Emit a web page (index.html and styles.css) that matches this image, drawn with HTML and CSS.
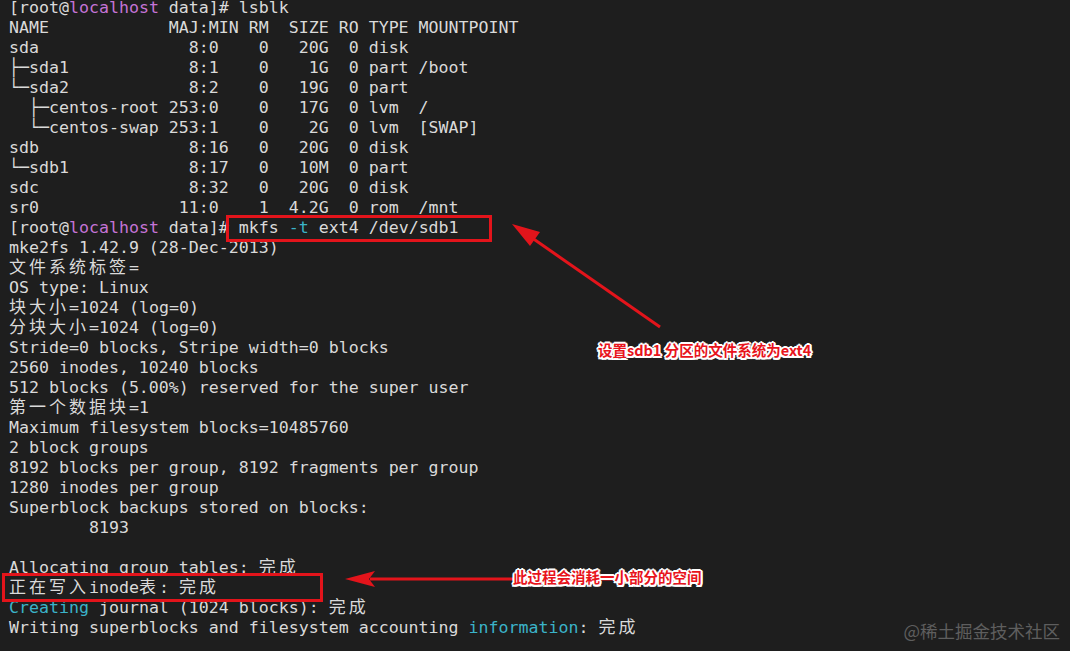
FILE: index.html
```html
<!DOCTYPE html>
<html>
<head>
<meta charset="utf-8" />
<title>mkfs</title>
<link rel="stylesheet" href="styles.css">
</head>
<body>
<div class="term">
<div class="screen">
<div class="ln">[root@<span class="host">localhost</span> data]# lsblk</div>
<div class="ln">NAME            MAJ:MIN RM  SIZE RO TYPE MOUNTPOINT</div>
<div class="ln">sda               8:0    0   20G  0 disk </div>
<div class="ln">├─sda1            8:1    0    1G  0 part /boot</div>
<div class="ln">└─sda2            8:2    0   19G  0 part </div>
<div class="ln">  ├─centos-root 253:0    0   17G  0 lvm  /</div>
<div class="ln">  └─centos-swap 253:1    0    2G  0 lvm  [SWAP]</div>
<div class="ln">sdb               8:16   0   20G  0 disk </div>
<div class="ln">└─sdb1            8:17   0   10M  0 part </div>
<div class="ln">sdc               8:32   0   20G  0 disk </div>
<div class="ln">sr0              11:0    1  4.2G  0 rom  /mnt</div>
<div class="ln">[root@<span class="host">localhost</span> data]# mkfs <span class="opt">-t</span> ext4 /dev/sdb1</div>
<div class="ln">mke2fs 1.42.9 (28-Dec-2013)</div>
<div class="ln"><span class="cjk">文件系统标签</span>=</div>
<div class="ln">OS type: Linux</div>
<div class="ln"><span class="cjk">块大小</span>=1024 (log=0)</div>
<div class="ln"><span class="cjk">分块大小</span>=1024 (log=0)</div>
<div class="ln">Stride=0 blocks, Stripe width=0 blocks</div>
<div class="ln">2560 inodes, 10240 blocks</div>
<div class="ln">512 blocks (5.00%) reserved for the super user</div>
<div class="ln"><span class="cjk">第一个数据块</span>=1</div>
<div class="ln">Maximum filesystem blocks=10485760</div>
<div class="ln">2 block groups</div>
<div class="ln">8192 blocks per group, 8192 fragments per group</div>
<div class="ln">1280 inodes per group</div>
<div class="ln">Superblock backups stored on blocks: </div>
<div class="ln">        8193</div>
<div class="ln"></div>
<div class="ln">Allocating group tables: <span class="cjk">完成</span></div>
<div class="ln"><span class="cjk">正在写入</span>inode<span class="cjk">表</span>: <span class="cjk">完成</span></div>
<div class="ln"><span class="opt">Creating</span> journal (1024 blocks): <span class="cjk">完成</span></div>
<div class="ln">Writing superblocks and filesystem accounting <span class="opt">information</span>: <span class="cjk">完成</span></div>
</div>

<!-- annotations -->
<div class="mark mark-cmd"></div>
<div class="mark mark-inode"></div>

<svg class="arrows" width="1070" height="651" viewBox="0 0 1070 651">
    <line x1="660" y1="327" x2="525" y2="233" stroke="#e3141b" stroke-width="3" />
    <polygon points="512,224 540,232 530,246" fill="#e3141b" />
    <line x1="703" y1="579" x2="370" y2="579" stroke="#e3141b" stroke-width="3" />
    <polygon points="345,579 375,571 369,579 375,587" fill="#e3141b" />
</svg>

<div class="note note-1">设置sdb1 分区的文件系统为ext4</div>
<div class="note note-2">此过程会消耗一小部分的空间</div>

<div class="watermark">@稀土掘金技术社区</div>
</div>
</body>
</html>
```

FILE: styles.css
```css
body {
    margin: 0;
    padding: 0;
    background: #1e1e1e;
    overflow: hidden;
}

.term {
    position: relative;
    width: 1070px;
    height: 651px;
    overflow: hidden;
}

.screen {
    margin: -2px 0 0 0;
    padding: 0 0 0 9px;
    font-family: "DejaVu Sans Mono", "Noto Sans CJK SC", monospace;
    font-size: 16.6px;
    line-height: 20px;
    color: #dadada;
}

.ln {
    height: 20px;
    white-space: pre;
}

.cjk {
    font-family: "Noto Sans CJK SC", sans-serif;
    font-size: 17px;
    letter-spacing: 3px;
    line-height: 0;
}

.host { color: #c474d6; }
.opt {  color: #3bb3c9; }

.mark {
    position: absolute;
    box-sizing: border-box;
    border: 3px solid #e3141b;
}

.mark-cmd {
    left: 226px;
    top: 215px;
    width: 266px;
    height: 27px;
}

.mark-inode {
    left: 2px;
    top: 573px;
    width: 321px;
    height: 29px;
}

.arrows {
    position: absolute;
    left: 0;
    top: 0;
}

.note {
    position: absolute;
    font-family: "Noto Sans CJK SC", sans-serif;
    font-weight: bold;
    font-size: 14.5px;
    line-height: 20px;
    color: #e8141c;
    white-space: nowrap;
    text-shadow:
        2px 0 0 #fff, -2px 0 0 #fff, 0 2px 0 #fff, 0 -2px 0 #fff,
        1.5px 1.5px 0 #fff, -1.5px 1.5px 0 #fff, 1.5px -1.5px 0 #fff, -1.5px -1.5px 0 #fff;
}

.note-1 {
    left: 598px;
    top: 340px;
}

.note-2 {
    left: 513px;
    top: 567px;
}

.watermark {
    position: absolute;
    right: 10px;
    bottom: 8px;
    font-family: "Noto Sans CJK SC", sans-serif;
    font-size: 17.5px;
    color: #5e5e5e;
}
```
